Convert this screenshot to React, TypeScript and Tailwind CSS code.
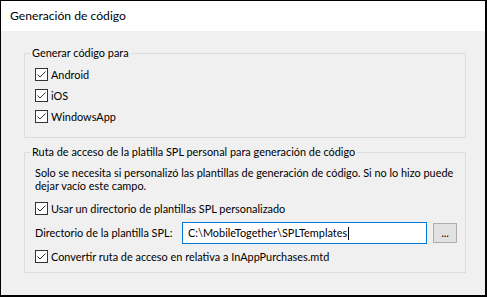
import React from 'react';

function Check({ label }: { label: string }) {
  return (
    <div className="flex items-center h-[13px]">
      <span className="w-[13px] h-[13px] border border-[#333333] bg-white flex items-center justify-center shrink-0">
        <svg width="11" height="11" viewBox="0 0 11 11">
          <polyline points="1.5,5.5 4,8 9.5,2.5" fill="none" stroke="#333333" strokeWidth="1" />
        </svg>
      </span>
      <span className="ml-[3px] leading-[13px] whitespace-nowrap">{label}</span>
    </div>
  );
}

export default function App() {
  return (
    <div className="w-[487px] h-[297px] bg-[#f0f0f0] border-l border-t border-r-2 border-b-2 border-black flex flex-col text-[10.9px] text-black font-['Lato',sans-serif]">
      {/* cabecera */}
      <div className="h-[30px] bg-white flex items-center pl-[9px] text-[12.15px] shrink-0">
        Generación de código
      </div>

      <div className="pl-[23px] pr-[19px]">
        {/* grupo 1 */}
        <fieldset className="mt-[14px] border border-[#dcdcdc]">
          <legend className="ml-[5px] px-[2px] leading-[16px] h-[16px]">Generar código para</legend>
          <div className="flex flex-col gap-[8px] pt-[7px] pb-[14px] pl-[10px]">
            <Check label="Android" />
            <Check label="iOS" />
            <Check label="WindowsApp" />
          </div>
        </fieldset>

        {/* grupo 2 */}
        <fieldset className="mt-[6px] border border-[#dcdcdc]">
          <legend className="ml-[5px] px-[2px] leading-[16px] h-[16px]">
            Ruta de acceso de la platilla SPL personal para generación de código
          </legend>
          <div className="pl-[10px] pt-[6px] pb-[9px]">
            <p className="leading-[13px] whitespace-nowrap">
              Solo se necesita si personalizó las plantillas de generación de código. Si no lo hizo puede
              <br />
              dejar vacío este campo.
            </p>
            <div className="mt-[10px]">
              <Check label="Usar un directorio de plantillas SPL personalizado" />
            </div>
            <div className="flex items-center mt-[7px] h-[22px]">
              <span className="w-[147px] whitespace-nowrap">Directorio de la plantilla SPL:</span>
              <div className="w-[245px] h-[22px] border border-[#0078d7] bg-white flex items-center pl-[5px]">
                <span className="whitespace-nowrap">C:\MobileTogether\SPLTemplates</span>
                <span className="w-px h-[13px] bg-black ml-px" />
              </div>
              <div className="ml-[6px] w-[24px] h-[20px] bg-[#e1e1e1] border border-[#adadad] flex items-center justify-center leading-none">
                ...
              </div>
            </div>
            <div className="mt-[6px]">
              <Check label="Convertir ruta de acceso en relativa a InAppPurchases.mtd" />
            </div>
          </div>
        </fieldset>
      </div>
    </div>
  );
}
